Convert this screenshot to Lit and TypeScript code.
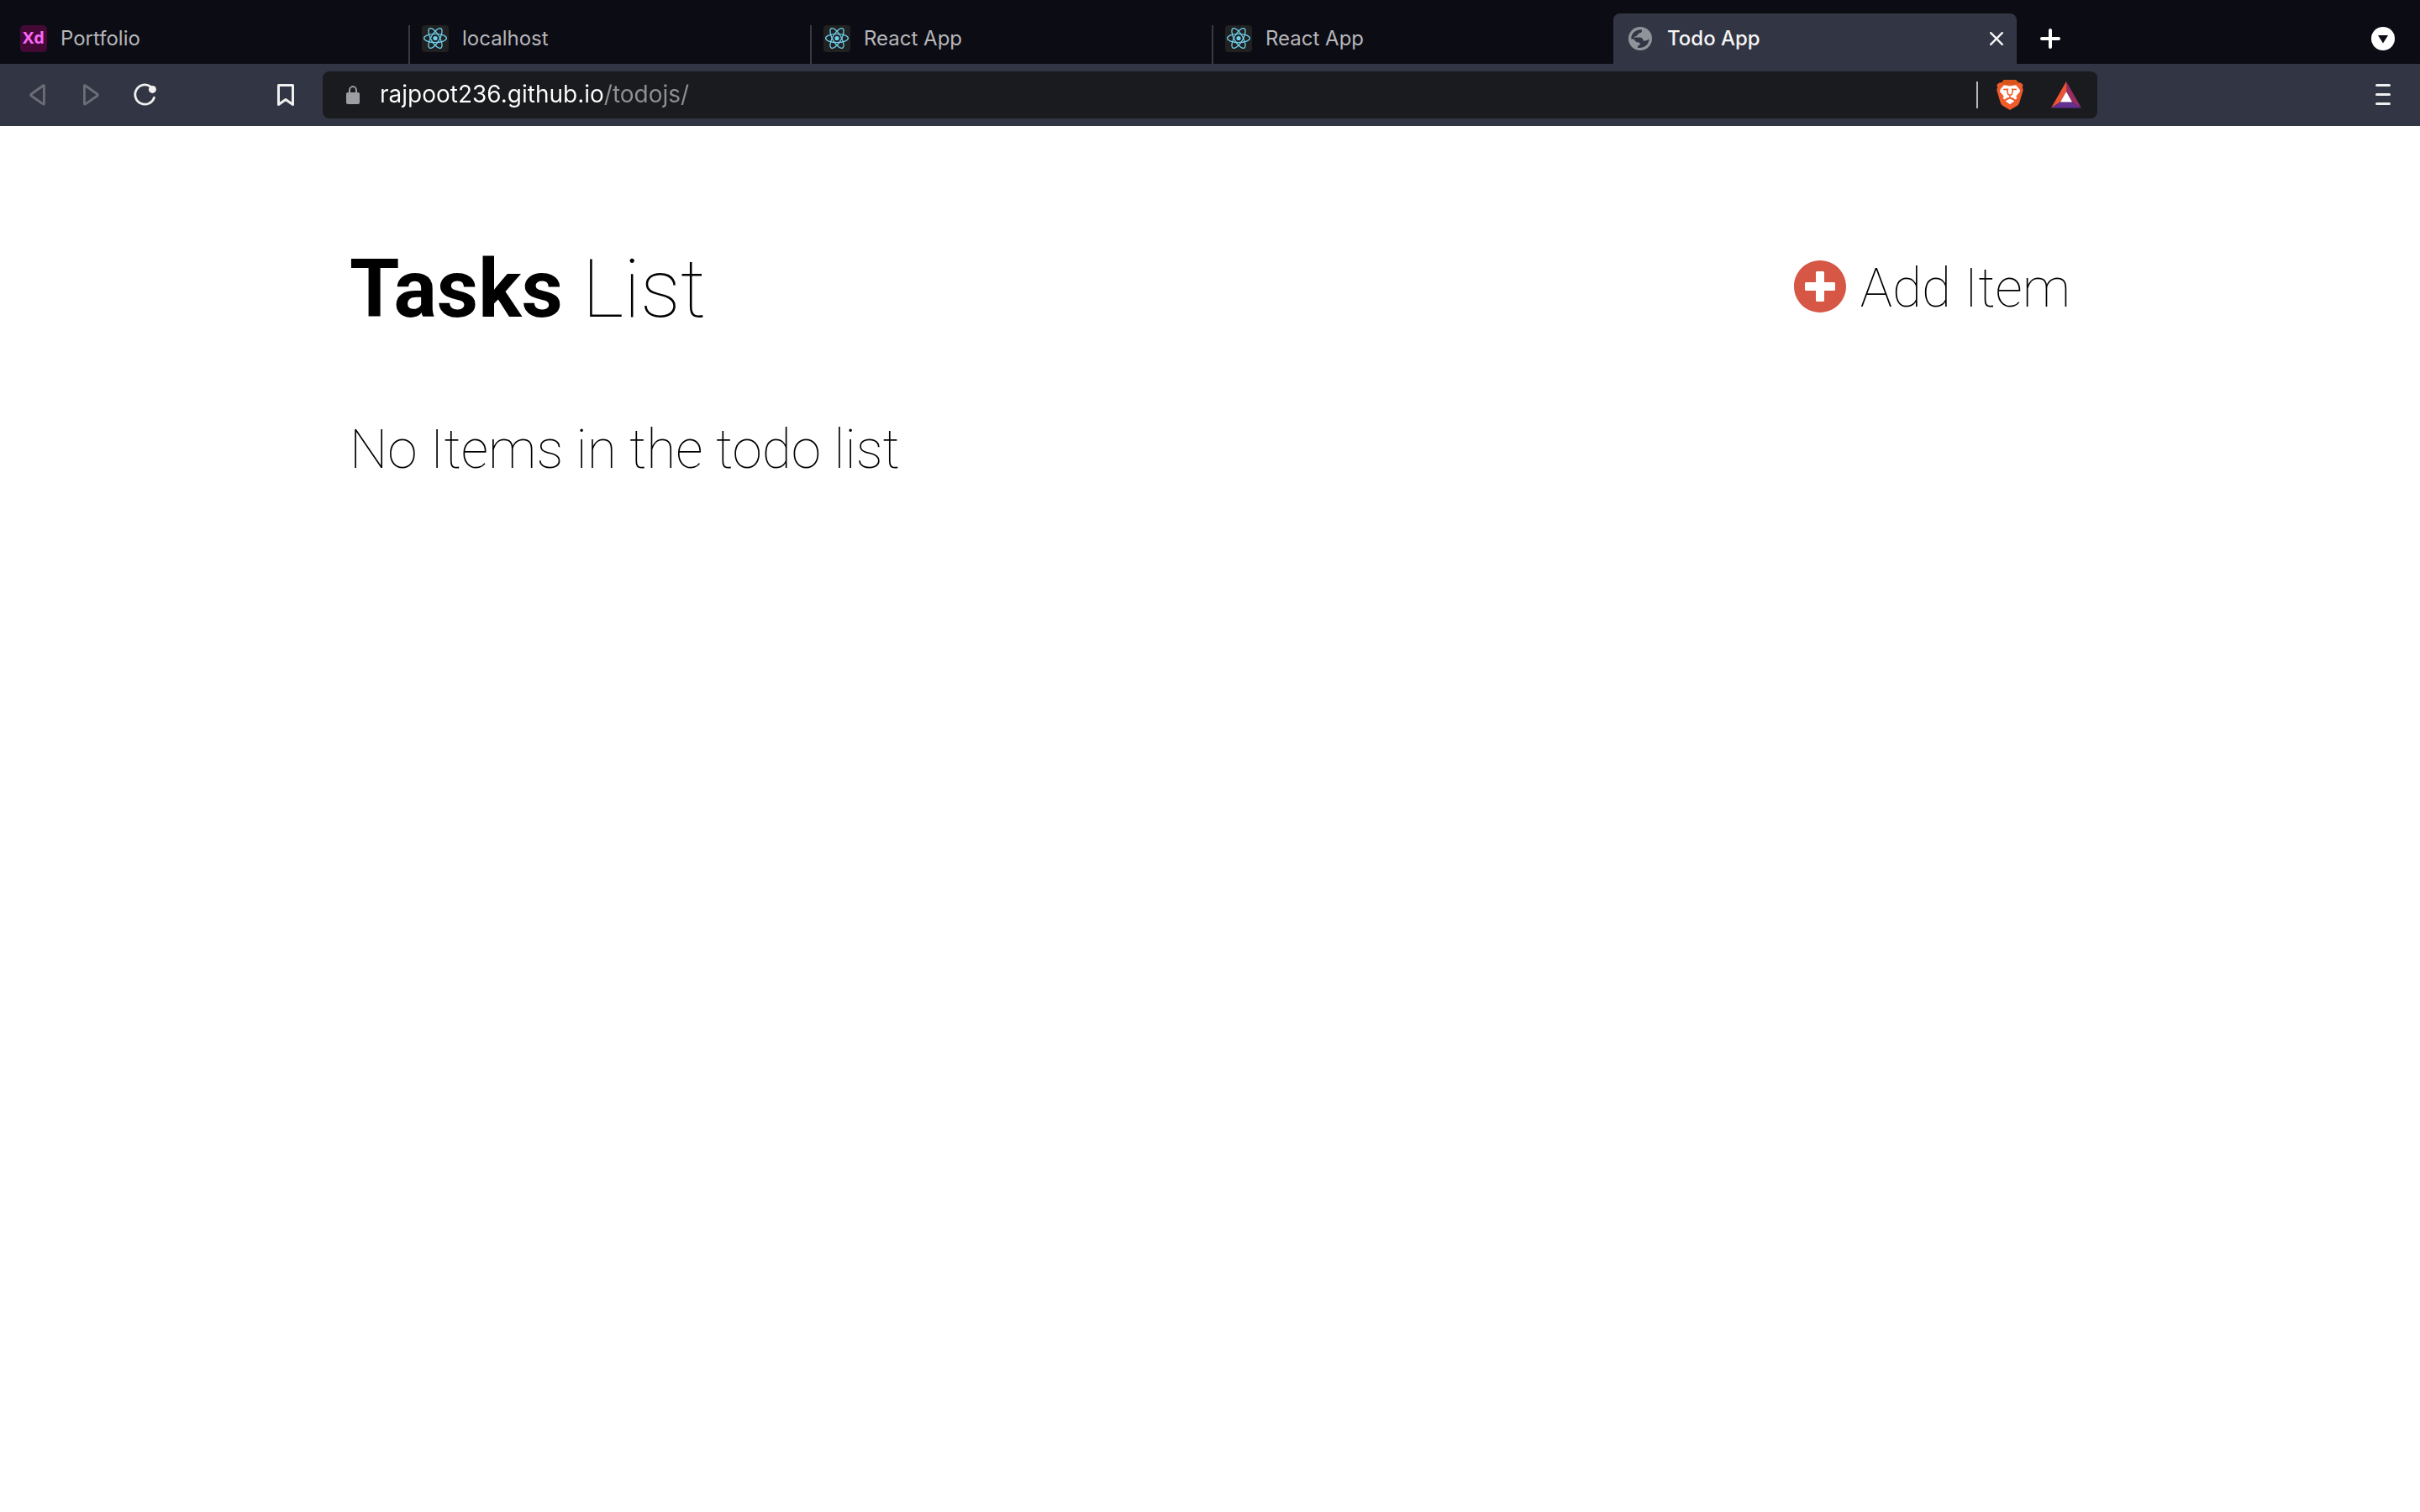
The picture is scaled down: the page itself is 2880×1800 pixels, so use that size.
import { LitElement, html, svg, css } from "lit";
import { customElement, state } from "lit/decorators.js";
import { classMap } from "lit/directives/class-map.js";

type Favicon = "xd" | "react" | "globe";

interface Tab {
  title: string;
  icon: Favicon;
}

const TABS: Tab[] = [
  { title: "Portfolio", icon: "xd" },
  { title: "localhost", icon: "react" },
  { title: "React App", icon: "react" },
  { title: "React App", icon: "react" },
  { title: "Todo App", icon: "globe" },
];

const favicon = (kind: Favicon) => {
  switch (kind) {
    case "xd":
      return html`<span class="favicon xd">Xd</span>`;
    case "react":
      return html`<svg class="favicon" viewBox="0 0 32 32" aria-hidden="true">
        <rect width="32" height="32" rx="4" fill="#212121" />
        <g fill="none" stroke="#6fd0ee" stroke-width="1.3">
          ${[0, 60, 120].map(
            (a) => svg`<ellipse cx="16" cy="15.5" rx="13.4" ry="5.1" transform="rotate(${a} 16 15.5)" />`
          )}
        </g>
        <circle cx="16" cy="15.5" r="2.6" fill="#6fd0ee" />
      </svg>`;
    case "globe":
      return html`<svg class="favicon" viewBox="0 0 32 32" aria-hidden="true">
        <circle cx="16" cy="16" r="14" fill="#8e9499" />
        <path
          fill="#323543"
          d="M17.6 5.2C18.6 7 17.8 8.8 15.6 9.2C13.4 9.6 13.4 11 12.6 12C11.8 13.4 9 13.2 8 14.6H14.6C18.4 14.6 19.6 16.4 19.4 18.4H22.8C24.2 18.4 24.8 17.2 26.6 16.6C26.4 22.2 22 26.8 16.2 26.9H13.2C12.4 25.4 13.6 23.6 16 23.2C15.8 21 15.2 20.4 12.6 20.2C10.4 20.2 9.6 18.2 8.6 16.8L5.2 16.2C5.2 10 10.2 4.8 17.6 5.2Z"
        />
      </svg>`;
  }
};

@customElement("app-root")
export class AppRoot extends LitElement {
  @state() private active = 4;
  @state() private items: string[] = [];

  static styles = css`
    :host {
      display: block;
      min-height: 100vh;
      background: #fff;
      color: #000;
      font-family: Roboto, "Liberation Sans", sans-serif;
    }
    button,
    input {
      margin: 0;
      padding: 0;
      border: 0;
      background: none;
      color: inherit;
      font: inherit;
    }
    button {
      cursor: pointer;
    }
    svg {
      display: block;
      flex: none;
    }
    .strip {
      display: flex;
      align-items: flex-end;
      height: 76px;
      background: #0c0c15;
      font-family: Inter, "Liberation Sans", sans-serif;
      font-size: 24px;
      color: #b6b6b8;
    }
    .tabs {
      display: flex;
      flex: 1;
      min-width: 0;
      padding-left: 8px;
    }
    .tab {
      box-sizing: border-box;
      display: flex;
      flex: 1;
      align-items: center;
      min-width: 0;
      height: 60px;
      padding-right: 16px;
    }
    .tab + .tab:not(.active) {
      background: linear-gradient(#3a3a3e, #3a3a3e) left bottom / 2px 46px no-repeat;
    }
    .tab.active {
      flex: 0 1 480px;
      border-radius: 8px 8px 0 0;
      background: #323543;
      color: #f4f4f4;
      font-weight: 500;
    }
    .tab-label {
      display: flex;
      flex: 1;
      align-items: center;
      gap: 16px;
      min-width: 0;
      height: 100%;
      padding-left: 16px;
      text-align: left;
      white-space: nowrap;
    }
    .title {
      padding-bottom: 2px;
    }
    .favicon {
      flex: none;
      width: 32px;
      height: 32px;
    }
    .xd {
      border-radius: 5px;
      background: #450936;
      color: #f767f5;
      font-family: "Open Sans", sans-serif;
      font-size: 20px;
      font-weight: 700;
      line-height: 30px;
      text-align: center;
    }
    .strip-end {
      display: flex;
      align-items: center;
      justify-content: space-between;
      box-sizing: border-box;
      width: 480px;
      height: 60px;
      padding: 0 28px;
      color: #fff;
    }
    .toolbar {
      display: grid;
      grid-template-columns: 384px 1fr 384px;
      align-items: center;
      height: 74px;
      background: #323543;
      color: #f0f0f0;
    }
    .nav {
      display: flex;
      align-items: center;
      gap: 32px;
      padding: 0 28px;
    }
    .nav .dim {
      color: #6c6e76;
    }
    .nav .mark {
      margin-left: auto;
    }
    .address {
      display: flex;
      align-items: center;
      gap: 24px;
      height: 56px;
      padding: 0 18px 0 24px;
      border-radius: 8px;
      background: #1a1b1f;
    }
    .url {
      flex: 1;
      min-width: 0;
      height: 40px;
      padding-bottom: 2px;
      outline: 0;
      background: linear-gradient(90deg, #fff 267px, #8f9092 267px);
      background-clip: text;
      -webkit-background-clip: text;
      color: transparent;
      caret-color: #fff;
      font-family: Inter, "Liberation Sans", sans-serif;
      font-size: 28px;
    }
    .extras {
      display: flex;
      align-items: center;
      gap: 22px;
    }
    .badges {
      display: flex;
      align-items: center;
      gap: 32px;
    }
    .rule {
      width: 2px;
      height: 32px;
      background: #b8b8ba;
    }
    .menu {
      justify-self: end;
      padding-right: 28px;
    }
    .page {
      box-sizing: border-box;
      max-width: 2048px;
      margin: 0 auto;
      padding-top: 130px;
    }
    .head {
      display: flex;
      align-items: center;
      justify-content: space-between;
    }
    h1 {
      margin: 0;
      font-size: 96px;
      font-weight: 100;
      line-height: 128px;
    }
    h1 b {
      font-weight: 700;
    }
    .add {
      font-size: 64px;
      font-weight: 100;
      line-height: 80px;
    }
    .add svg {
      display: inline-block;
      margin-right: 16px;
      vertical-align: -8px;
    }
    .list {
      margin: 88px 0 0;
      font-size: 64px;
      font-weight: 100;
      line-height: 80px;
    }
  `;

  private renderTab(tab: Tab, index: number) {
    const active = index === this.active;
    return html`<div class=${classMap({ tab: true, active })}>
      <button class="tab-label" role="tab" aria-selected=${active} @click=${() => (this.active = index)}>
        ${favicon(tab.icon)}<span class="title">${tab.title}</span>
      </button>
      ${active
        ? html`<button aria-label="Close tab">
            <svg width="16" height="32" viewBox="0 0 16 32" stroke="#f4f4f4" stroke-width="2.4" stroke-linecap="round">
              <path d="M1.2 9.2 14.8 22.8M14.8 9.2 1.2 22.8" />
            </svg>
          </button>`
        : ""}
    </div>`;
  }

  render() {
    return html`
      <div class="strip">
        <div class="tabs" role="tablist">${TABS.map((t, i) => this.renderTab(t, i))}</div>
        <div class="strip-end">
          <button aria-label="New tab">
            <svg width="24" height="32" viewBox="0 0 24 32" stroke="currentColor" stroke-width="4" stroke-linecap="round">
              <path d="M12 6V26M2 16H22" />
            </svg>
          </button>
          <button aria-label="Search tabs">
            <svg width="32" height="32" viewBox="0 0 32 32">
              <circle cx="16" cy="16" r="14" fill="currentColor" />
              <path fill="#0c0c15" d="M10 12H22L16 21.5Z" />
            </svg>
          </button>
        </div>
      </div>

      <div class="toolbar">
        <div class="nav">
          <button class="dim" aria-label="Back">
            <svg width="32" height="32" viewBox="0 0 32 32" fill="none" stroke="currentColor" stroke-width="2.8" stroke-linejoin="round">
              <path d="M24.4 5.2V26.4Q24.4 27.6 23.2 26.9L9.2 17Q8 16 9.2 15L23.2 5Q24.4 4.2 24.4 5.2Z" />
            </svg>
          </button>
          <button class="dim" aria-label="Forward">
            <svg width="32" height="32" viewBox="0 0 32 32" fill="none" stroke="currentColor" stroke-width="2.8" stroke-linejoin="round">
              <path d="M8.4 5.2V26.4Q8.4 27.6 9.6 26.9L23.8 17Q25 16 23.8 15L9.6 5Q8.4 4.2 8.4 5.2Z" />
            </svg>
          </button>
          <button aria-label="Reload">
            <svg width="32" height="32" viewBox="0 0 32 32" fill="none" stroke="currentColor" stroke-width="2.8" stroke-linecap="round">
              <path d="M23.6 6.4A11.6 11.6 0 1 0 27.4 19.2" />
              <circle cx="25.4" cy="9.4" r="4.5" fill="currentColor" stroke="none" />
            </svg>
          </button>
          <button class="mark" aria-label="Bookmark this page">
            <svg width="32" height="32" viewBox="0 0 32 32" fill="none" stroke="currentColor" stroke-width="3" stroke-linejoin="round">
              <path d="M7.5 4.5H24.5V27.5L16 21.5L7.5 27.5Z" />
            </svg>
          </button>
        </div>

        <div class="address">
          <svg width="20" height="32" viewBox="0 0 20 32">
            <rect x="4" y="13" width="16" height="14" rx="2" fill="#9b9fa4" />
            <path d="M8 14V10.5A4 4.4 0 0 1 16 10.5V14" fill="none" stroke="#9b9fa4" stroke-width="2" />
          </svg>
          <input class="url" type="text" aria-label="Address" spellcheck="false" value="rajpoot236.github.io/todojs/" />
          <div class="extras">
            <span class="rule"></span>
            <div class="badges">
              <button aria-label="Brave Shields">
                <svg width="32" height="36" viewBox="0 0 32 36">
                  <path fill="#f15a29" d="M9 0H23L26.2 3.4C28.4 2.8 30.6 4.4 31.6 6.6L30.8 9.2L31.8 12L27.2 27.6Q26.4 29.8 24.4 31L16 36L7.6 31Q5.6 29.8 4.8 27.6L.2 12L1.2 9.2L.4 6.6C1.4 4.4 3.6 2.8 5.8 3.4Z" />
                  <path fill="#d9541c" d="M9 0H23L26.2 3.4L22 6.4L16 5.2L10 6.4L5.8 3.4Z" />
                  <path fill="#fff" d="M9 6.2L16 7.4L23 6.2L27.8 12L28 14L23.4 19.6L24.4 22.2L22 23.6L17.6 21L16 21.8L14.4 21L10 23.6L7.6 22.2L8.6 19.6L4 14L4.2 12ZM16 22.4L21.4 25.2L16 29.2L10.6 25.2Z" />
                  <path fill="none" stroke="#f15a29" stroke-width="1.5" d="M8 11.4L13.4 11.2L12.8 13.2L13.8 17.4L16 18.4L18.2 17.4L19.2 13.2L18.6 11.2L24 11.4M16 18.4V21.4M11 23L16 21.4L21 23" />
                </svg>
              </button>
              <button aria-label="Brave Rewards">
                <svg width="38" height="32" viewBox="0 0 38 32">
                  <path fill="#ec5434" d="M19 0V12L12 24.6L1 31.4Z" />
                  <path fill="#982d63" d="M19 0V12L26 24.6L37 31.4Z" />
                  <path fill="#652f92" d="M1 31.4L12 24.6H26L37 31.4Z" />
                  <path fill="#fff" d="M19 12L26 24.6H12Z" />
                </svg>
              </button>
            </div>
          </div>
        </div>

        <button class="menu" aria-label="Menu">
          <svg width="32" height="32" viewBox="0 0 32 32" stroke="currentColor" stroke-width="3" stroke-linecap="round">
            <path d="M8.5 4.5H23.5M8.5 15.5H23.5M8.5 26.5H23.5" />
          </svg>
        </button>
      </div>

      <main class="page">
        <header class="head">
          <h1><b>Tasks</b> List</h1>
          <button class="add"><svg width="64" height="64" viewBox="0 0 512 512" fill="#d75746">
              <path d="M256 8C119 8 8 119 8 256s111 248 248 248 248-111 248-248S393 8 256 8zm144 276c0 6.6-5.4 12-12 12h-92v92c0 6.6-5.4 12-12 12h-56c-6.6 0-12-5.4-12-12v-92h-92c-6.6 0-12-5.4-12-12v-56c0-6.6 5.4-12 12-12h92v-92c0-6.6 5.4-12 12-12h56c6.6 0 12 5.4 12 12v92h92c6.6 0 12 5.4 12 12v56z" />
            </svg>Add Item</button>
        </header>
        ${this.items.length
          ? html`<ul class="list">${this.items.map((item) => html`<li>${item}</li>`)}</ul>`
          : html`<p class="list">No Items in the todo list</p>`}
      </main>
    `;
  }
}
